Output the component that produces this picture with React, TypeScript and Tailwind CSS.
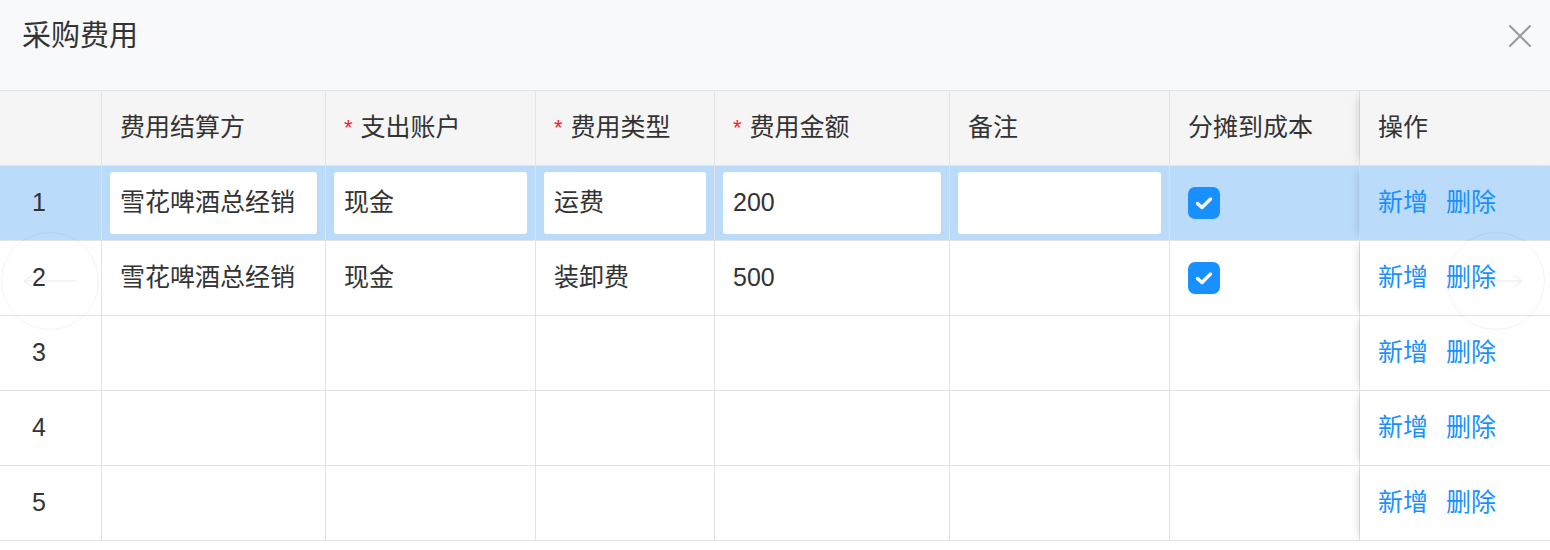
import React from "react";

const gridCols = "grid grid-cols-[102px_224px_210px_179px_235px_220px_190px_190px]";

const FONT = { fontFamily: '"Liberation Sans", "Noto Sans CJK SC", sans-serif' };

function Check() {
  return (
    <div className="w-[32px] h-[32px] rounded-[7px] bg-[#1890ff] flex items-center justify-center">
      <svg width="24" height="24" viewBox="0 0 24 24" fill="none">
        <path d="M5.5 12.5 L10 16.5 L18.5 8" stroke="white" strokeWidth="3.4" strokeLinecap="round" strokeLinejoin="round" />
      </svg>
    </div>
  );
}

function Actions() {
  return (
    <div className="flex items-center gap-[18px] text-[#1890ff]">
      <span>新增</span>
      <span>删除</span>
    </div>
  );
}

type Row = {
  n: number;
  a?: string;
  b?: string;
  c?: string;
  d?: string;
  check?: boolean;
};

const rows: Row[] = [
  { n: 1, a: "雪花啤酒总经销", b: "现金", c: "运费", d: "200", check: true },
  { n: 2, a: "雪花啤酒总经销", b: "现金", c: "装卸费", d: "500", check: true },
  { n: 3 },
  { n: 4 },
  { n: 5 },
];

function Input({ v }: { v?: string }) {
  return (
    <div className="h-[62px] w-full bg-white rounded-[3px] flex items-center px-[10px] text-[#333] whitespace-nowrap overflow-hidden">
      {v}
    </div>
  );
}

export default function App() {
  return (
    <div className="w-[1550px] h-[550px] bg-white relative overflow-hidden text-[25px] text-[#333]" style={FONT}>
      {/* Title bar */}
      <div className="h-[90px] bg-[#f8f9fb] flex items-start justify-between pt-[18px] pl-[22px] pr-[18px]">
        <div className="text-[29px] leading-[36px] text-[#333]">采购费用</div>
        <svg width="24" height="24" viewBox="0 0 24 24" className="mt-[6px]">
          <path d="M2 2 L22 22 M22 2 L2 22" stroke="#9a9a9a" strokeWidth="2" strokeLinecap="round" />
        </svg>
      </div>

      {/* Table */}
      <div className="border-t border-[#e3e3e3]">
        {/* Header */}
        <div className={`${gridCols} h-[75px] bg-[#f5f5f5]`}>
          {["", "费用结算方", "*支出账户", "*费用类型", "*费用金额", "备注", "分摊到成本", "操作"].map((h, i) => (
            <div
              key={i}
              className={`flex items-center border-b border-[#e3e3e3] ${i < 7 ? "border-r" : ""} ${i === 0 ? "" : "pl-[18px]"} ${i === 7 ? "relative z-10 shadow-[-7px_0_8px_-5px_rgba(0,0,0,0.13)] bg-[#f5f5f5]" : ""}`}
            >
              {h.startsWith("*") ? (
                <>
                  <span className="text-[#f5222d] mr-[8px] text-[22px] leading-none">*</span>
                  <span>{h.slice(1)}</span>
                </>
              ) : (
                h
              )}
            </div>
          ))}
        </div>

        {rows.map((r) => {
          const sel = r.n === 1;
          const bg = sel ? "bg-[#bbdbfb]" : "bg-white";
          const cell = `flex items-center border-b border-[#e3e3e3] ${bg}`;
          return (
            <div key={r.n} className={`${gridCols} h-[75px]`}>
              <div className={`${cell} border-r pl-[32px]`}>{r.n}</div>
              {sel ? (
                <>
                  <div className={`${cell} border-r px-[8px]`}><Input v={r.a} /></div>
                  <div className={`${cell} border-r px-[8px]`}><Input v={r.b} /></div>
                  <div className={`${cell} border-r px-[8px]`}><Input v={r.c} /></div>
                  <div className={`${cell} border-r px-[8px]`}><Input v={r.d} /></div>
                  <div className={`${cell} border-r px-[8px]`}><Input /></div>
                </>
              ) : (
                <>
                  <div className={`${cell} border-r pl-[18px] whitespace-nowrap`}>{r.a}</div>
                  <div className={`${cell} border-r pl-[18px]`}>{r.b}</div>
                  <div className={`${cell} border-r pl-[18px]`}>{r.c}</div>
                  <div className={`${cell} border-r pl-[18px]`}>{r.d}</div>
                  <div className={`${cell} border-r pl-[18px]`}></div>
                </>
              )}
              <div className={`${cell} border-r pl-[18px]`}>{r.check ? <Check /> : null}</div>
              <div className={`${cell} pl-[18px] relative z-10 shadow-[-7px_0_8px_-5px_rgba(0,0,0,0.13)]`}>
                <Actions />
              </div>
            </div>
          );
        })}
      </div>

      {/* faint overlay nav circles */}
      <div className="absolute left-[1px] top-[232px] w-[98px] h-[98px] rounded-full border border-[rgba(0,0,0,0.05)] z-20 pointer-events-none flex items-center justify-center">
        <svg width="60" height="20" viewBox="0 0 60 20">
          <path d="M4 10 H56 M4 10 L12 4 M4 10 L12 16" stroke="rgba(0,0,0,0.06)" strokeWidth="1.5" fill="none" />
        </svg>
      </div>
      <div className="absolute left-[1447px] top-[232px] w-[98px] h-[98px] rounded-full border border-[rgba(0,0,0,0.05)] z-20 pointer-events-none flex items-center justify-center">
        <svg width="60" height="20" viewBox="0 0 60 20">
          <path d="M4 10 H56 M56 10 L48 4 M56 10 L48 16" stroke="rgba(0,0,0,0.06)" strokeWidth="1.5" fill="none" />
        </svg>
      </div>
    </div>
  );
}
